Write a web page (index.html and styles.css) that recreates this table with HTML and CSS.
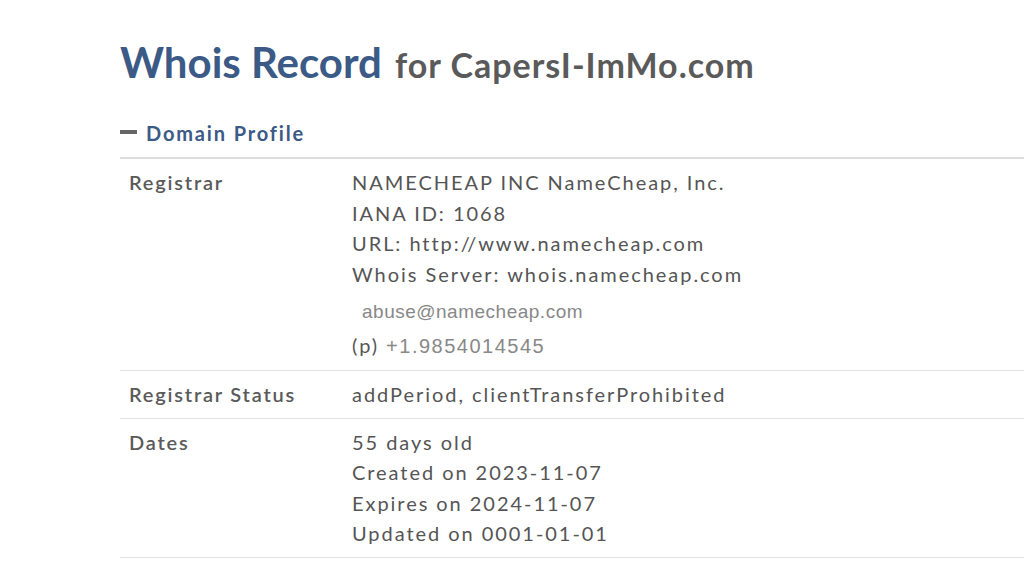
FILE: index.html
```html
<!DOCTYPE html>
<html>
<head>
<meta charset="utf-8">
<link rel="stylesheet" href="styles.css">
</head>
<body>
<main class="page">
  <h1 class="title"><span class="title-main">Whois Record</span> <span class="title-sub">for CapersI-ImMo.com</span></h1>
  <h2 class="section"><span class="minus"></span>Domain Profile</h2>
  <div class="table">
    <div class="row">
      <div class="label">Registrar</div>
      <div class="value">
        <div class="line">NAMECHEAP INC NameCheap, Inc.</div>
        <div class="line">IANA ID: 1068</div>
        <div class="line">URL: http://www.namecheap.com</div>
        <div class="line">Whois Server: whois.namecheap.com</div>
        <div class="line email">abuse@namecheap.com</div>
        <div class="line phone">(p) <span class="phone-num">+1.9854014545</span></div>
      </div>
    </div>
    <div class="row">
      <div class="label">Registrar Status</div>
      <div class="value">
        <div class="line">addPeriod, clientTransferProhibited</div>
      </div>
    </div>
    <div class="row">
      <div class="label">Dates</div>
      <div class="value">
        <div class="line">55 days old</div>
        <div class="line">Created on 2023-11-07</div>
        <div class="line">Expires on 2024-11-07</div>
        <div class="line">Updated on 0001-01-01</div>
      </div>
    </div>
  </div>
</main>
</body>
</html>
```
FILE: styles.css
```css
html, body {
  margin: 0;
  padding: 0;
  background: #ffffff;
  overflow: hidden;
}
body {
  font-family: Lato, "Open Sans", sans-serif;
  color: #555555;
}
.page {
  padding: 37px 0 0 120px;
  width: 904px;
}
.title {
  margin: 0;
  font-weight: 700;
  font-size: 33px;
  line-height: 50px;
  white-space: nowrap;
}
.title-main {
  font-size: 42px;
  color: #3b5a86;
}
.title-sub {
  font-size: 34px;
  letter-spacing: 1px;
  margin-left: 5px;
  color: #5a5a5a;
}
.section {
  margin: 28px 0 0 0;
  font-size: 20px;
  font-weight: 700;
  letter-spacing: 1.85px;
  color: #3b5a86;
  line-height: 30px;
  display: flex;
  align-items: center;
  padding-bottom: 9px;
  border-bottom: 2px solid #dddddd;
}
.minus {
  display: inline-block;
  width: 17px;
  height: 4px;
  background: #666666;
  margin-right: 9px;
  margin-bottom: 3px;
}
.row {
  display: grid;
  grid-template-columns: 232px 1fr;
  border-bottom: 1px solid #e3e3e3;
  padding: 8px 0 8px 0;
}
.label {
  padding-left: 9px;
  font-size: 20px;
  font-weight: 600;
  line-height: 30.5px;
  color: #5a5a5a;
  letter-spacing: 1.8px;
}
.value {
  font-size: 20px;
  line-height: 30.5px;
  color: #555555;
  letter-spacing: 1.95px;
}
.email {
  font-family: "Liberation Sans", Arial, sans-serif;
  font-size: 19px;
  color: #888888;
  letter-spacing: 0.5px;
  padding-left: 10px;
  padding-top: 6px;
  line-height: 34px;
}
.phone {
  line-height: 32px;
}
.phone-num {
  font-family: "Liberation Sans", Arial, sans-serif;
  font-size: 20px;
  color: #888888;
  letter-spacing: 1.5px;
}
```
